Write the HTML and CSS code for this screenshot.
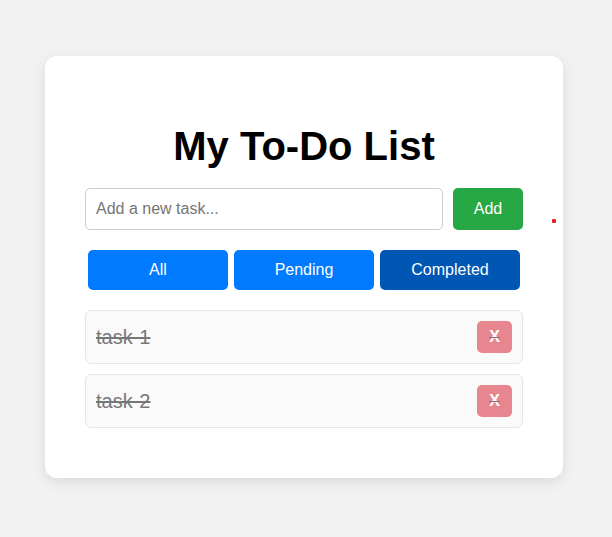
FILE: index.html
```html
<!DOCTYPE html>
<html lang="en">
<head>
<meta charset="utf-8">
<title>My To-Do List</title>
<link rel="stylesheet" href="styles.css">
</head>
<body>
<div class="card">
  <h1 class="title">My To-Do List</h1>
  <div class="add-row">
    <input class="task-input" type="text" placeholder="Add a new task...">
    <button class="add-btn">Add</button>
  </div>
  <div class="filters">
    <button class="filter">All</button>
    <button class="filter">Pending</button>
    <button class="filter active">Completed</button>
  </div>
  <ul class="tasks">
    <li class="task done"><span class="task-text">task-1</span><button class="del"><span class="del-x">X</span></button></li>
    <li class="task done"><span class="task-text">task-2</span><button class="del"><span class="del-x">X</span></button></li>
  </ul>
  <span class="dot"></span>
</div>
</body>
</html>
```
FILE: styles.css
```css
* { box-sizing: border-box; }
html, body { margin: 0; padding: 0; }
body {
  background: #f2f2f2;
  font-family: "Liberation Sans", Arial, sans-serif;
  height: 537px;
  overflow: hidden;
}
.card {
  position: relative;
  width: 518px;
  margin: 56px 0 0 45px;
  padding: 40px 40px 40px;
  background: #fff;
  border-radius: 12px;
  box-shadow: 0 4px 14px rgba(0,0,0,0.1);
}
.title {
  margin: 27px 0 19px;
  font-size: 40px;
  font-weight: bold;
  text-align: center;
  color: #000;
  line-height: 46px;
}
.add-row {
  display: flex;
  gap: 10px;
}
.task-input {
  flex: 1;
  height: 42px;
  padding: 0 10px;
  border: 1px solid #ccc;
  border-radius: 5px;
  font-family: inherit;
  font-size: 16px;
  color: #333;
}
.task-input::placeholder { color: #757575; }
.add-btn {
  width: 70px;
  height: 42px;
  border: none;
  border-radius: 5px;
  background: #28a745;
  color: #fff;
  font-family: inherit;
  font-size: 16px;
}
.filters {
  display: flex;
  margin-top: 20px;
}
.filter {
  flex: 1;
  height: 40px;
  margin: 0 3px;
  border: none;
  border-radius: 5px;
  background: #007bff;
  color: #fff;
  font-family: inherit;
  font-size: 16px;
}
.filter.active { background: #0056b3; }
.tasks {
  list-style: none;
  margin: 20px 0 0;
  padding: 0;
}
.task {
  display: flex;
  align-items: center;
  justify-content: space-between;
  height: 54px;
  margin-bottom: 10px;
  padding: 0 10px;
  background: #fafafa;
  border: 1px solid #e6e6e6;
  border-radius: 6px;
}
.task.done .task-text {
  color: #777;
  text-decoration: line-through;
  font-size: 20px;
}
.del {
  width: 35px;
  height: 32px;
  padding: 0;
  border: none;
  border-radius: 5px;
  background: #e8868f;
  color: #fff;
  font-family: inherit;
  font-size: 16px;
  font-weight: bold;
}
.del-x {
  text-decoration: line-through;
  text-decoration-color: #777;
}
.dot {
  position: absolute;
  left: 507px;
  top: 163px;
  width: 4px;
  height: 4px;
  background: #e52020;
  border-radius: 1px;
}
```
